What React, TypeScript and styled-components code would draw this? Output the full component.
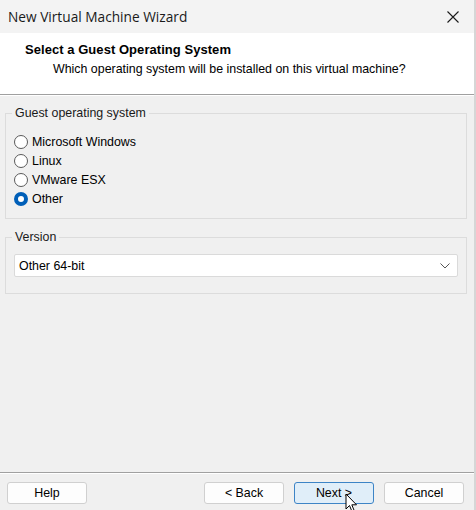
import styled, { createGlobalStyle } from "styled-components";

const GlobalStyle = createGlobalStyle`
  html, body {
    margin: 0;
    padding: 0;
    background: #f0f0f0;
  }
  * {
    box-sizing: border-box;
  }
`;

const Window = styled.div`
  position: relative;
  width: 476px;
  height: 510px;
  display: flex;
  flex-direction: column;
  background: #f0f0f0;
  border-right: 2px solid #d6d6d6;
  font-family: "Liberation Sans", Arial, sans-serif;
  font-size: 12.4px;
  color: #000;
  overflow: hidden;
`;

const TitleBar = styled.div`
  height: 33px;
  display: flex;
  align-items: center;
  justify-content: space-between;
  padding: 0 14px 0 8px;
  background: #f3f3f3;
  font-family: "Open Sans", "Noto Sans", sans-serif;
  font-size: 13.7px;
  color: #1a1a1a;
`;

const CloseButton = styled.div`
  width: 14px;
  height: 14px;
  display: flex;
  align-items: center;
  justify-content: center;
`;

const Header = styled.div`
  height: 62px;
  background: #fff;
  border-bottom: 1px solid #a0a0a0;
  box-shadow: 0 1px 0 #fff;
  padding: 9px 0 0 25px;
  display: flex;
  flex-direction: column;
  gap: 5px;
`;

const HeaderTitle = styled.div`
  font-weight: bold;
  font-size: 13px;
  letter-spacing: 0.05px;
`;

const HeaderSub = styled.div`
  padding-left: 28px;
  font-size: 12.4px;
`;

const Body = styled.div`
  flex: 1;
  display: flex;
  flex-direction: column;
  gap: 11px;
  padding: 11px 7px 0 5px;
`;

const Group = styled.fieldset<{ $height: number }>`
  margin: 0;
  padding: 0;
  height: ${(p) => p.$height}px;
  border: 1px solid #dcdcdc;
  border-radius: 0;
`;

const Legend = styled.legend`
  margin-left: 6px;
  padding: 0 3px;
  font-size: 12.4px;
  color: #1a1a1a;
`;

const RadioList = styled.div`
  display: flex;
  flex-direction: column;
  gap: 3px;
  padding: 14px 0 0 8px;
`;

const RadioRow = styled.label`
  display: flex;
  align-items: center;
  gap: 4px;
  height: 16px;
`;

const RadioCircle = styled.span<{ $checked?: boolean }>`
  width: 14px;
  height: 14px;
  border-radius: 50%;
  border: ${(p) => (p.$checked ? "4px solid #005fb8" : "1px solid #5a5a5a")};
  background: #fff;
  flex-shrink: 0;
`;

const SelectBox = styled.div`
  margin: 10px 8px 0 8px;
  height: 23px;
  background: #fff;
  border: 1px solid #dadada;
  border-radius: 2px;
  display: flex;
  align-items: center;
  justify-content: space-between;
  padding: 0 7px 0 4px;
`;

const Spacer = styled.div`
  flex: 1;
`;

const Footer = styled.div`
  height: 38px;
  border-top: 1px solid #a0a0a0;
  box-shadow: inset 0 1px 0 #fff;
  display: flex;
  align-items: flex-start;
  padding: 9px 10px 0 7px;
`;

const Button = styled.button<{ $primary?: boolean }>`
  width: 80px;
  height: 22px;
  padding: 0;
  font-family: "Liberation Sans", Arial, sans-serif;
  font-size: 12.4px;
  color: #000;
  background: ${(p) => (p.$primary ? "#e0eef9" : "#fdfdfd")};
  border: 1px solid ${(p) => (p.$primary ? "#3d84c6" : "#d0d0d0")};
  border-radius: 3px;
`;

const ButtonGroup = styled.div`
  display: flex;
  gap: 10px;
  margin-left: auto;
`;

const Cursor = styled.svg`
  position: absolute;
  left: 345px;
  top: 493px;
`;

const options = ["Microsoft Windows", "Linux", "VMware ESX", "Other"];

export default function App() {
  return (
    <>
      <GlobalStyle />
      <Window>
        <TitleBar>
          <span>New Virtual Machine Wizard</span>
          <CloseButton>
            <svg width="12" height="12" viewBox="0 0 12 12">
              <path d="M0.5 0.5 L11.5 11.5 M11.5 0.5 L0.5 11.5" stroke="#1a1a1a" strokeWidth="1.1" />
            </svg>
          </CloseButton>
        </TitleBar>
        <Header>
          <HeaderTitle>Select a Guest Operating System</HeaderTitle>
          <HeaderSub>Which operating system will be installed on this virtual machine?</HeaderSub>
        </Header>
        <Body>
          <Group $height={113}>
            <Legend>Guest operating system</Legend>
            <RadioList>
              {options.map((o) => (
                <RadioRow key={o}>
                  <RadioCircle $checked={o === "Other"} />
                  {o}
                </RadioRow>
              ))}
            </RadioList>
          </Group>
          <Group $height={64}>
            <Legend>Version</Legend>
            <SelectBox>
              <span>Other 64-bit</span>
              <svg width="10" height="6" viewBox="0 0 10 6">
                <path d="M0.5 0.5 L5 5 L9.5 0.5" fill="none" stroke="#555" strokeWidth="1" />
              </svg>
            </SelectBox>
          </Group>
          <Spacer />
        </Body>
        <Footer>
          <Button>Help</Button>
          <ButtonGroup>
            <Button>&lt; Back</Button>
            <Button $primary>Next &gt;</Button>
            <Button>Cancel</Button>
          </ButtonGroup>
        </Footer>
        <Cursor width="13" height="20" viewBox="0 0 13 20">
          <path
            d="M1 1 L1 16 L4.5 12.5 L7 18.5 L9.2 17.6 L6.8 11.8 L11.5 11.8 Z"
            fill="#fff"
            stroke="#000"
            strokeWidth="1"
            strokeLinejoin="round"
          />
        </Cursor>
      </Window>
    </>
  );
}
